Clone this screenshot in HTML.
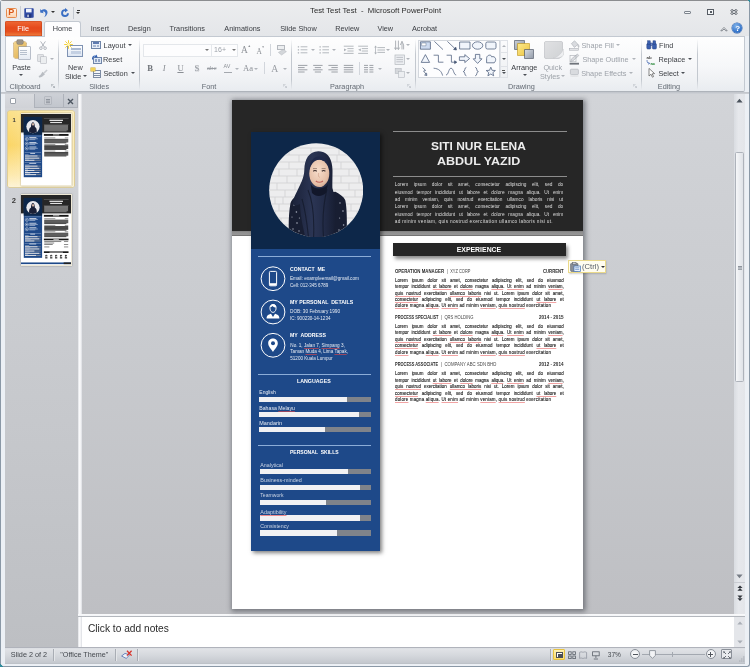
<!DOCTYPE html>
<html><head><meta charset="utf-8"><title>Test Test Test - Microsoft PowerPoint</title>
<style>
html,body{margin:0;padding:0}
body{width:750px;height:667px;overflow:hidden;position:relative;background:#ecf0f5;font-family:"Liberation Sans",sans-serif}
.t{position:absolute;white-space:pre;line-height:normal}
.t u{text-decoration:underline solid rgba(235,70,70,.6);text-decoration-thickness:.5px;text-underline-offset:.7px}
.a{position:absolute}
.sep{position:absolute;width:1px;top:39px;height:51px;background:linear-gradient(rgba(190,196,204,0),#c3c8cf 30%,#c3c8cf 80%,rgba(190,196,204,0))}
.dd{position:absolute;width:0;height:0;border-left:2px solid transparent;border-right:2px solid transparent;border-top:2.2px solid #4a4e55;margin-left:-.4px}
.dd.g{border-top-color:#b0b4ba}
.ln{position:absolute;height:1px;background:#8c8c8c}
.bar{position:absolute;height:5.2px;left:260px;width:110.6px;background:#7f838a}
.bar i{position:absolute;left:0;top:0;bottom:0;background:#f1f1f3}
.p{position:absolute;left:395px;width:168.8px;font-size:4.45px;line-height:6.5px;color:#262626;-webkit-text-stroke:.12px #262626;text-align:justify;text-align-last:justify;white-space:nowrap}
.p.l{text-align-last:left}
.p u,.hp u{text-decoration:underline solid rgba(225,50,50,.45);text-decoration-thickness:.5px;text-underline-offset:.7px}
.hp{position:absolute;left:394.8px;width:168.4px;font-size:4.75px;line-height:7.33px;color:#dcdcdc;text-align:justify;text-align-last:justify;white-space:nowrap}
.hp.l{text-align-last:left}
</style></head><body><div id="app" style="position:absolute;left:0;top:0;width:750px;height:667px;will-change:transform">
<!-- window frame -->
<div class="a" style="left:0;top:0;width:750px;height:667px;box-sizing:border-box;border:1px solid #8a98a6;border-top-color:#8b8d90;border-right-width:1.4px;border-radius:3px"></div>
<div class="a" style="left:1px;top:.8px;width:747.6px;height:35.4px;background:linear-gradient(#ecedef,#e4e6e9)"></div>
<div class="a" style="left:0;top:664px;width:3px;height:3px;background:linear-gradient(45deg,#2f8c9c 50%,rgba(0,0,0,0) 52%)"></div>
<div class="a" style="left:747px;top:0;width:3px;height:3px;background:linear-gradient(45deg,rgba(0,0,0,0) 50%,#2f8c9c 52%)"></div>
<!-- quick access toolbar -->
<div class="a" style="left:6.2px;top:7.6px;width:10.4px;height:10px;box-sizing:border-box;border:1px solid #e58b4e;border-radius:1.5px;background:linear-gradient(#fff3e6,#fbd5b5)"></div>
<span class="t" style="left:8.3px;top:7.2px;font-size:9px;font-weight:700;color:#d9591a">P</span>
<div class="a" style="left:20.2px;top:6px;width:1px;height:13px;background:#c9ced5"></div>
<svg class="a" style="left:24px;top:8px" width="10" height="10" viewBox="0 0 10 10"><rect x=".3" y=".3" width="9.4" height="9.4" rx=".8" fill="#2f4aa3"/><rect x="2" y=".8" width="5.6" height="3.6" fill="#eef2fb"/><rect x="2.6" y="6" width="4.8" height="3.7" fill="#23367e"/><rect x="3.4" y="6.6" width="1.3" height="2.6" fill="#dfe6f7"/></svg>
<svg class="a" style="left:38.5px;top:8px" width="10" height="10" viewBox="0 0 10 10"><path d="M1.2 4.6 L1.2 1 L2.4 2.2 C4.2 .6 7.2 .9 8.2 3 C9.2 5.4 7.6 8.2 5 9.2 C6.6 7.4 6.9 5.4 6 4.2 C5.3 3.4 4.3 3.5 3.7 4 L4.9 5.2 Z" fill="#3b6fc4"/></svg>
<div class="dd" style="left:51.2px;top:11.4px;border-top-color:#333"></div>
<svg class="a" style="left:59.5px;top:7.6px" width="10" height="10" viewBox="0 0 10 10"><path d="M5 1.2 A3.9 3.9 0 1 0 8.9 5.2 L7 5.2 A2 2 0 1 1 5 3.1 L5 4.6 L8 2.2 L5 0 Z" fill="#3b6fc4"/></svg>
<div class="a" style="left:73.2px;top:7px;width:1px;height:12px;background:#c4c9d0"></div>
<div class="a" style="left:76.6px;top:10px;width:3.6px;height:1px;background:#333"></div>
<div class="dd" style="left:76.8px;top:12.4px;border-top-color:#333"></div>
<!-- window buttons -->
<div class="a" style="left:684px;top:11.2px;width:7.4px;height:3.2px;box-sizing:border-box;border:1px solid #7d848d;border-radius:1px;background:#f4f6f8"></div>
<div class="a" style="left:707px;top:9px;width:7.4px;height:6px;box-sizing:border-box;border:1px solid #565c64;background:#f4f6f8"></div>
<div class="a" style="left:709.6px;top:11px;width:2.8px;height:2px;background:#565c64"></div>
<svg class="a" style="left:729.5px;top:9px" width="8" height="6" viewBox="0 0 8 6"><path d="M1 .8 L7 5.2 M7 .8 L1 5.2" stroke="#50565e" stroke-width="2.5"/><path d="M1 .8 L7 5.2 M7 .8 L1 5.2" stroke="#f4f5f7" stroke-width=".9"/></svg>
<!-- ribbon min + help -->
<svg class="a" style="left:720px;top:25.5px" width="8" height="6" viewBox="0 0 8 6"><path d="M.8 4.8 L4 1.4 L7.2 4.8 L5.8 4.8 L4 3 L2.2 4.8 Z" fill="#fff" stroke="#6d737b" stroke-width=".8" stroke-linejoin="round"/></svg>
<div class="a" style="left:732.3px;top:23.2px;width:10.2px;height:10.2px;border-radius:50%;background:radial-gradient(circle at 40% 30%,#7fb2ea,#2f6fc6 70%);box-shadow:0 0 0 .5px #2a5da8"></div>
<span class="t" style="left:735.2px;top:23.6px;font-size:8px;font-weight:700;color:#fff">?</span>
<!-- tabs -->
<div class="a" style="left:5.2px;top:21px;width:36.6px;height:14.8px;border-radius:2px 2px 0 0;background:linear-gradient(#ee6a36 0%,#e64a1c 45%,#e5501f 70%,#f0803f 100%);box-shadow:inset 0 0 0 .6px #c7431a"></div>
<div class="a" style="left:44.4px;top:21.4px;width:36.8px;height:15.4px;box-sizing:border-box;border:1px solid #c3c9d1;border-bottom:none;border-radius:2.5px 2.5px 0 0;background:#fdfdfe"></div>

<!-- ribbon body -->
<div class="a" style="left:4.6px;top:36px;width:740.4px;height:55.6px;box-sizing:border-box;border:1px solid #c3c9d1;border-bottom-color:#aeb3ba;border-radius:0 0 2px 2px;background:linear-gradient(#fefefe 0%,#f6f7f9 55%,#e9ecf0 100%)"></div>
<div class="a" style="left:45.4px;top:35.6px;width:34.8px;height:1.6px;background:#fdfdfe"></div>
<div class="a" style="left:1px;top:91.6px;width:748px;height:2.6px;background:linear-gradient(#bfc3c9,#cfd2d7)"></div>
<div class="sep" style="left:58px"></div><div class="sep" style="left:139px"></div><div class="sep" style="left:291.3px"></div><div class="sep" style="left:414.5px"></div><div class="sep" style="left:641px"></div><div class="sep" style="left:696.7px"></div>
<!-- clipboard -->
<div class="a" style="left:13.6px;top:42.4px;width:12.4px;height:15.6px;border-radius:1.2px;background:linear-gradient(135deg,#f3d58d,#dfae4f);box-shadow:0 0 0 .5px #b98a3a"></div>
<div class="a" style="left:16.6px;top:40.4px;width:6.4px;height:3.4px;border-radius:1px;background:#9b9387;box-shadow:0 0 0 .4px #6d675f"></div>
<div class="a" style="left:18.6px;top:46.6px;width:11px;height:12.4px;background:linear-gradient(#ffffff,#e6ebf3);box-shadow:0 0 0 .6px #8c97a8"></div>
<div class="a" style="left:20.4px;top:50px;width:7px;height:.8px;background:#b7c0cd;box-shadow:0 2px 0 #b7c0cd,0 4px 0 #b7c0cd"></div>
<div class="dd" style="left:19.8px;top:74.2px"></div>
<svg class="a" style="left:38.6px;top:40.8px" width="8" height="9" viewBox="0 0 8 9"><path d="M1.6 .4 L5.4 6 M6.4 .4 L2.6 6" stroke="#a8adb4" stroke-width=".9" fill="none"/><circle cx="1.9" cy="7.2" r="1.3" fill="none" stroke="#a8adb4" stroke-width=".9"/><circle cx="6.1" cy="7.2" r="1.3" fill="none" stroke="#a8adb4" stroke-width=".9"/></svg>
<div class="a" style="left:37.8px;top:55.2px;width:5.4px;height:6px;background:#e3e5e8;box-shadow:0 0 0 .6px #b3b7bd"></div>
<div class="a" style="left:40.6px;top:57px;width:5.4px;height:6px;background:#eceef0;box-shadow:0 0 0 .6px #b3b7bd"></div>
<div class="dd g" style="left:50.6px;top:58.4px"></div>
<svg class="a" style="left:38px;top:69px" width="10" height="9" viewBox="0 0 10 9"><path d="M5.4 3.4 L8.6 .4 L9.6 1.4 L6.6 4.6 Z" fill="#c9ccd1"/><path d="M.6 7 C2.4 6.6 3.4 4.6 4.6 2.8 L7 5.2 C5.4 6.6 3.6 8.6 1.2 8.6 Z" fill="#b9bdc3"/></svg>
<svg class="a" style="left:51.4px;top:84.2px" width="4" height="4" viewBox="0 0 4 4"><path d="M.3 .3 H2.6 M.3 .3 V2.6" stroke="#9298a0" stroke-width=".6" fill="none"/><path d="M1.4 1.4 L3.6 3.6 M3.6 2 V3.6 H2" stroke="#9298a0" stroke-width=".6" fill="none"/></svg>
<!-- slides -->
<div class="a" style="left:67.4px;top:44.6px;width:16px;height:12px;box-sizing:border-box;border:1px solid #7f93b3;background:linear-gradient(#ffffff,#dde6f3)"></div>
<div class="a" style="left:70.6px;top:48px;width:10px;height:1.8px;background:#a9b9d2"></div>
<div class="a" style="left:70.6px;top:51.4px;width:10px;height:2.6px;background:#c4d0e3"></div>
<svg class="a" style="left:64.2px;top:40.4px" width="9" height="9" viewBox="0 0 9 9"><path d="M4.5 .2 V8.8 M.2 4.5 H8.8 M1.4 1.4 L7.6 7.6 M7.6 1.4 L1.4 7.6" stroke="#f3cf3a" stroke-width="1"/><circle cx="4.5" cy="4.5" r="1.5" fill="#fff6b8"/></svg>
<div class="dd" style="left:83.4px;top:75.2px"></div>
<div class="a" style="left:91.4px;top:40.8px;width:9.6px;height:7.8px;box-sizing:border-box;border:1px solid #6f85a8;background:#e8eef8"></div>
<div class="a" style="left:93px;top:42.4px;width:6.4px;height:1.4px;background:#5f7bb0"></div>
<div class="a" style="left:93px;top:44.6px;width:2.8px;height:2.4px;background:#a9b8d1"></div><div class="a" style="left:96.6px;top:44.6px;width:2.8px;height:2.4px;background:#a9b8d1"></div>
<div class="dd" style="left:128.2px;top:44.2px"></div>
<div class="a" style="left:93px;top:56.6px;width:8.6px;height:7.4px;box-sizing:border-box;border:1px solid #6f85a8;background:#dfe7f4"></div>
<div class="a" style="left:94.6px;top:58.6px;width:2.4px;height:3.4px;background:#8ea2c4"></div><div class="a" style="left:97.8px;top:58.6px;width:2.4px;height:3.4px;background:#8ea2c4"></div>
<svg class="a" style="left:90.6px;top:53.6px" width="7" height="7" viewBox="0 0 7 7"><path d="M1 5.4 C.6 2.6 2.8 .8 5 1.6 L5.6 .4 L6.6 3.6 L3.4 3.6 L4.2 2.6 C3 2.2 1.8 3.4 2.2 5.4 Z" fill="#2f5fb3"/></svg>
<div class="a" style="left:93.4px;top:70px;width:7.8px;height:8px;box-sizing:border-box;border:1px solid #7c8ba3;background:#f3f6fa"></div>
<div class="a" style="left:93.4px;top:72.6px;width:7.8px;height:1px;background:#7c8ba3"></div><div class="a" style="left:93.4px;top:75.2px;width:7.8px;height:1px;background:#7c8ba3"></div>
<div class="a" style="left:91px;top:68.2px;width:3.6px;height:2.8px;background:#f1d257;box-shadow:0 0 0 .5px #c9a530"></div>
<div class="dd" style="left:131px;top:72.4px"></div>
<!-- font -->
<div class="a" style="left:142.6px;top:43.8px;width:69.2px;height:13px;box-sizing:border-box;border:1px solid #e4e7eb;background:#fdfdfe"></div>
<div class="a" style="left:211.2px;top:43.8px;width:27.2px;height:13px;box-sizing:border-box;border:1px solid #e4e7eb;background:#fdfdfe"></div>
<div class="dd" style="left:205.8px;top:49.2px;border-top-color:#777"></div><div class="dd" style="left:232px;top:49.2px;border-top-color:#777"></div>
<span class="t" style="left:241px;top:44.6px;font-family:'Liberation Serif',serif;font-size:9.4px;color:#8d9197">A</span><span class="t" style="left:247.4px;top:43.6px;font-size:3.6px;color:#8d9197">▲</span>
<span class="t" style="left:256.6px;top:46.8px;font-family:'Liberation Serif',serif;font-size:7.4px;color:#8d9197">A</span><span class="t" style="left:261.4px;top:44.6px;font-size:3.2px;color:#8d9197">▼</span>
<div class="a" style="left:270px;top:44px;width:1px;height:12px;background:#d2d6dc"></div>
<div class="a" style="left:277px;top:45px;width:7.6px;height:5px;box-sizing:border-box;border:.8px solid #b5b9bf;background:#eceef0"></div>
<svg class="a" style="left:277px;top:48.6px" width="10" height="7" viewBox="0 0 10 7"><path d="M1.4 3.4 L6.2 .6 L9.4 2.6 L4.6 6 Z" fill="#d3d6da" stroke="#b1b5bb" stroke-width=".5"/></svg>
<span class="t" style="left:147.2px;top:63.2px;font-family:'Liberation Serif',serif;font-size:8.6px;font-weight:700;color:#6d7177">B</span>
<span class="t" style="left:162.8px;top:63.2px;font-family:'Liberation Serif',serif;font-size:8.6px;font-style:italic;color:#8a8e94">I</span>
<span class="t" style="left:177.4px;top:63.2px;font-family:'Liberation Serif',serif;font-size:8.6px;text-decoration:underline;color:#8a8e94">U</span>
<span class="t" style="left:194.4px;top:63px;font-family:'Liberation Serif',serif;font-size:8.6px;font-weight:700;color:#a0a4aa;text-shadow:.6px .6px 0 #d5d7db">S</span>
<span class="t" style="left:207px;top:64.4px;font-family:'Liberation Serif',serif;font-size:6.8px;text-decoration:line-through;color:#9a9ea4">abc</span>
<span class="t" style="left:223.6px;top:63px;font-size:5.4px;color:#8d9197">AV</span><div class="a" style="left:224px;top:71.6px;width:8px;height:.8px;background:#a4a8ae"></div>
<div class="dd g" style="left:235px;top:67.6px"></div>
<span class="t" style="left:243px;top:63.4px;font-family:'Liberation Serif',serif;font-size:8.6px;color:#8d9197">Aa</span><div class="dd g" style="left:254.6px;top:67.6px"></div>
<div class="a" style="left:263.6px;top:62px;width:1px;height:12px;background:#d2d6dc"></div>
<span class="t" style="left:271.2px;top:62.6px;font-family:'Liberation Serif',serif;font-size:9.6px;color:#9a9ea4">A</span><div class="dd g" style="left:283.6px;top:67.6px"></div>
<svg class="a" style="left:283.4px;top:84.2px" width="4" height="4" viewBox="0 0 4 4"><path d="M.3 .3 H2.6 M.3 .3 V2.6" stroke="#b5bac1" stroke-width=".6" fill="none"/><path d="M1.4 1.4 L3.6 3.6 M3.6 2 V3.6 H2" stroke="#b5bac1" stroke-width=".6" fill="none"/></svg>
<!-- paragraph -->
<svg class="a" style="left:297px;top:45px" width="120" height="34" viewBox="0 0 120 34">
<g stroke="#aeb2b8" stroke-width=".9" fill="none">
<path d="M3.6 1.8 H10.4 M3.6 4.8 H10.4 M3.6 7.8 H10.4"/><path d="M25.4 1.8 H32 M25.4 4.8 H32 M25.4 7.8 H32"/>
<path d="M46.8 1.2 H56.6 M50.4 3.6 H56.6 M50.4 6 H56.6 M46.8 8.4 H56.6"/><path d="M61.2 1.2 H71 M64.8 3.6 H71 M64.8 6 H71 M61.2 8.4 H71"/>
<path d="M80.4 2.6 H88 M80.4 5 H88 M80.4 7.4 H88"/>
</g>
<g fill="#aeb2b8"><rect x=".8" y="1.2" width="1.3" height="1.3"/><rect x=".8" y="4.2" width="1.3" height="1.3"/><rect x=".8" y="7.2" width="1.3" height="1.3"/><rect x="22.6" y="1" width="1" height="1.7"/><rect x="22.6" y="4" width="1" height="1.7"/><rect x="22.6" y="7" width="1" height="1.7"/>
<path d="M47 3.4 L49.6 4.8 L47 6.2 Z"/><path d="M63.8 3.4 L61.2 4.8 L63.8 6.2 Z"/><path d="M78.6 .4 L80 2.4 H77.2 Z M78.6 9.6 L80 7.6 H77.2 Z"/><rect x="78.2" y="2" width=".8" height="6"/></g>
<g stroke="#9da1a7" stroke-width="1" fill="none">
<path d="M1 20.4 H10.4 M1 22.6 H7.6 M1 24.8 H10.4 M1 27 H7.6"/>
<path d="M16.2 20.4 H25.6 M17.8 22.6 H24 M16.2 24.8 H25.6 M17.8 27 H24"/>
<path d="M31.4 20.4 H40.8 M34.4 22.6 H40.8 M31.4 24.8 H40.8 M34.4 27 H40.8"/>
<path d="M46.8 20.4 H56.2 M46.8 22.6 H56.2 M46.8 24.8 H56.2 M46.8 27 H56.2"/>
<path d="M67 20.4 H71 M67 22.6 H71 M67 24.8 H71 M67 27 H71 M72.4 20.4 H76.4 M72.4 22.6 H76.4 M72.4 24.8 H76.4 M72.4 27 H76.4"/>
</g></svg>
<div class="dd g" style="left:311.4px;top:49.2px"></div><div class="dd g" style="left:332.6px;top:49.2px"></div><div class="dd g" style="left:386.8px;top:49.2px"></div><div class="dd g" style="left:378px;top:68px"></div>
<div class="a" style="left:358.7px;top:62px;width:1px;height:13px;background:#d2d6dc"></div>
<svg class="a" style="left:394px;top:39.6px" width="18" height="40" viewBox="0 0 18 40"><g stroke="#a6aab0" stroke-width=".9" fill="none"><path d="M1.6 .6 V9.4 M4.4 .6 V9.4 M8 3 V9.4 M.4 7.6 L1.6 9.6 L2.8 7.6 M3.2 7.6 L4.4 9.6 L5.6 7.6"/><path d="M6.4 5 L8 1.2 L9.6 5 V9.4"/></g><rect x="1" y="15" width="9.4" height="9.4" fill="#eceef1" stroke="#b4b8be" stroke-width=".7"/><path d="M2.4 17.4 H9 M2.4 19.6 H9 M2.4 21.8 H9" stroke="#b4b8be" stroke-width=".8"/><rect x="1.2" y="28.4" width="6" height="5" fill="#d5d8dc" stroke="#b4b8be" stroke-width=".6"/><rect x="4.4" y="31.4" width="6" height="6" fill="#eceef1" stroke="#b4b8be" stroke-width=".6"/></svg>
<div class="dd g" style="left:406.6px;top:44.2px"></div><div class="dd g" style="left:406.6px;top:58.4px"></div><div class="dd g" style="left:406.6px;top:72.4px"></div>
<svg class="a" style="left:407.4px;top:84.2px" width="4" height="4" viewBox="0 0 4 4"><path d="M.3 .3 H2.6 M.3 .3 V2.6" stroke="#b5bac1" stroke-width=".6" fill="none"/><path d="M1.4 1.4 L3.6 3.6 M3.6 2 V3.6 H2" stroke="#b5bac1" stroke-width=".6" fill="none"/></svg>
<!-- shapes gallery -->
<div class="a" style="left:418px;top:39.6px;width:82px;height:38.8px;box-sizing:border-box;border:1px solid #d3d7dd;background:#fdfdfe"></div>
<div class="a" style="left:499.6px;top:39.6px;width:8px;height:38.8px;box-sizing:border-box;border:1px solid #dfe2e7;background:linear-gradient(#fbfbfc,#eef0f3)"></div>
<div class="a" style="left:499.6px;top:52.4px;width:8px;height:1px;background:#dfe2e7"></div><div class="a" style="left:499.6px;top:65.6px;width:8px;height:1px;background:#dfe2e7"></div>
<div class="dd g" style="left:502px;top:45px;transform:rotate(180deg)"></div><div class="dd" style="left:502px;top:58.4px"></div><div class="a" style="left:501.8px;top:69.8px;width:3.6px;height:.8px;background:#555"></div><div class="dd" style="left:502px;top:71.8px"></div>
<svg class="a" style="left:419px;top:40.4px" width="80" height="37" viewBox="0 0 80 37"><g stroke="#4a5b7a" stroke-width=".75" fill="#f1f5fb" stroke-linejoin="round">
<rect x="1.4" y="1.8" width="10" height="7.4" fill="#cfdcf1"/><rect x="2.6" y="3" width="4.4" height="2.8" fill="#fff" stroke-width=".4"/>
<path d="M15.4 1.4 L24 9.6" fill="none"/><path d="M28.4 1.4 L36.4 9" fill="none"/><path d="M37.4 10 L34.6 9.4 L36.8 7.2 Z" fill="#44546f"/>
<rect x="40.6" y="2" width="10.4" height="7"/><ellipse cx="58.6" cy="5.5" rx="5.2" ry="3.7"/><rect x="66.8" y="2" width="10.2" height="7" rx="1.6"/>
<path d="M6.4 14.6 L10.6 22.4 H2.2 Z"/><path d="M14.6 15.2 H19.4 V22.2 H24.4" fill="none"/><path d="M27.6 15.2 H32.4 V22.2 H36.6" fill="none"/><path d="M37.8 22.2 L35.6 20.8 V23.6 Z" fill="#44546f"/>
<path d="M40.4 16.8 H45.8 V14.6 L50.6 18.6 L45.8 22.6 V20.4 H40.4 Z"/><path d="M56.4 14.4 H60.8 V18.8 H63 L58.6 23.4 L54.2 18.8 H56.4 Z"/><path d="M67.6 22.8 V18.4 C67.6 14.6 72.6 14.2 72.6 16.8 C76.6 15.6 78 20.2 75.2 22.8 Z"/>
<path d="M3.6 27.6 L6.6 30.4 L4.6 31 L7.4 34.6 M7.8 35.6 L5.6 35 L7.6 33.2 Z" fill="none"/><path d="M14.6 28.2 C20 28.6 22.6 31.4 23.6 35.6" fill="none"/><path d="M27 35 C29.6 35 29.6 28.2 32 28.2 C34.6 28.2 34.6 35 37.2 35" fill="none"/>
<path d="M47.4 27.4 C45 27.4 46.6 31.6 44.2 31.6 C46.6 31.6 45 35.8 47.4 35.8" fill="none"/><path d="M56.2 27.4 C58.6 27.4 57 31.6 59.4 31.6 C57 31.6 58.6 35.8 56.2 35.8" fill="none"/>
<path d="M71.8 27.2 L73.1 30.3 L76.4 30.5 L73.9 32.6 L74.7 35.8 L71.8 34 L68.9 35.8 L69.7 32.6 L67.2 30.5 L70.5 30.3 Z"/></g></svg>
<!-- arrange -->
<div class="a" style="left:514.6px;top:40.6px;width:9px;height:8.6px;background:linear-gradient(135deg,#c9ced6,#8d95a2);box-shadow:0 0 0 .8px #5d6675"></div>
<div class="a" style="left:518.2px;top:44.4px;width:11px;height:10.6px;background:linear-gradient(135deg,#fbe88a,#eec541);box-shadow:0 0 0 .8px #caa42f"></div>
<div class="a" style="left:525px;top:50.4px;width:8.4px;height:8px;background:linear-gradient(135deg,#d5dae1,#959dab);box-shadow:0 0 0 .8px #5d6675"></div>
<div class="dd" style="left:523px;top:74.2px"></div>
<!-- quick styles -->
<div class="a" style="left:544.4px;top:40.6px;width:18.6px;height:18px;border-radius:3px 3px 6px 3px;background:linear-gradient(135deg,#e1e2e4,#cfd1d4);box-shadow:inset 0 0 0 .6px #c3c5c9"></div>
<svg class="a" style="left:552px;top:48px" width="12" height="11" viewBox="0 0 12 11"><path d="M1 10 C5 9.6 9.6 6 11.2 1 L11.6 7 C10 9.4 6 10.6 1 10 Z" fill="#eeeff1" stroke="#c6c8cc" stroke-width=".5"/></svg>
<div class="dd g" style="left:561.8px;top:75.2px"></div>
<!-- shape fill/outline/effects -->
<svg class="a" style="left:568.6px;top:40px" width="11" height="38" viewBox="0 0 11 38"><g fill="#d9dbdf" stroke="#a9adb3" stroke-width=".6"><path d="M2.4 3.6 L5.6 .8 L9 4.4 L5.4 7.4 Z"/><path d="M9 4.4 C10.2 5.6 10.2 6.8 9.6 7.6 C9 6.8 8.8 5.6 9 4.4Z"/><rect x=".6" y="8.6" width="8.8" height="1.6" fill="#e8e9ec"/>
<path d="M1.6 21.6 L2.4 19 L8.4 14 L9.8 15.6 L4 20.8 Z"/><rect x=".6" y="22.8" width="9.4" height="1.8" fill="#6f747b" stroke="none"/><rect x="1" y="15.4" width="6" height="6.4" fill="none"/>
<rect x="1.4" y="29.2" width="8" height="5.4" rx="1"/><ellipse cx="5.4" cy="36" rx="4.4" ry="1" fill="#e4e5e8" stroke="none"/></g></svg>
<div class="dd g" style="left:616.4px;top:44.2px"></div><div class="dd g" style="left:632.4px;top:58.4px"></div><div class="dd g" style="left:629px;top:72.4px"></div>
<svg class="a" style="left:633.4px;top:84.2px" width="4" height="4" viewBox="0 0 4 4"><path d="M.3 .3 H2.6 M.3 .3 V2.6" stroke="#b5bac1" stroke-width=".6" fill="none"/><path d="M1.4 1.4 L3.6 3.6 M3.6 2 V3.6 H2" stroke="#b5bac1" stroke-width=".6" fill="none"/></svg>
<!-- editing -->
<svg class="a" style="left:645.6px;top:40px" width="12" height="38" viewBox="0 0 12 38"><g fill="#3a5fae" stroke="#233f82" stroke-width=".5"><rect x=".8" y="3.4" width="4" height="5.6" rx="1"/><rect x="6.4" y="3.4" width="4" height="5.6" rx="1"/><rect x="1.6" y=".8" width="2.6" height="3.4"/><rect x="7" y=".8" width="2.6" height="3.4"/><rect x="4.6" y="3" width="2" height="2.4" fill="#6d88c8"/></g>
<text x=".6" y="18.6" font-family="Liberation Sans,sans-serif" font-size="4.4" font-weight="700" fill="#444">ab</text><text x="4.4" y="24.6" font-family="Liberation Sans,sans-serif" font-size="4.4" font-weight="700" fill="#2e8b3d">ac</text><path d="M1 20 C1 23 2 23.4 3.6 23.4 M3.6 23.4 L2.4 22.2 M3.6 23.4 L2.4 24.4" stroke="#3a5fae" stroke-width=".7" fill="none"/>
<path d="M3 28.4 L3 36 L5 34.2 L6.4 37.2 L7.6 36.6 L6.2 33.8 L8.6 33.6 Z" fill="#fff" stroke="#555" stroke-width=".7" stroke-linejoin="round"/></svg>
<div class="dd" style="left:688.4px;top:58.4px"></div><div class="dd" style="left:681.6px;top:72.4px"></div>

<!-- left panel + workspace -->
<div class="a" style="left:4.5px;top:94.2px;width:73.1px;height:553.2px;background:linear-gradient(#d3d5d9,#bdbfc3)"></div>
<div class="a" style="left:77.6px;top:94.2px;width:4.2px;height:553.2px;background:linear-gradient(90deg,#dfe1e5,#fbfbfc 40%,#f1f2f4 70%,#d9dbe0)"></div>
<div class="a" style="left:81.8px;top:94.2px;width:652.6px;height:520.4px;background:linear-gradient(#d2d4d8 0%,#c9cbcf 45%,#bebfc3 100%)"></div>
<!-- panel tabs -->
<div class="a" style="left:4.5px;top:94.4px;width:29.7px;height:13.6px;background:linear-gradient(#d9dbdf,#d0d2d7)"></div>
<div class="a" style="left:34.2px;top:94.4px;width:43.4px;height:13.2px;box-sizing:border-box;background:linear-gradient(#cdd0d6,#c2c6cd);border:1px solid #aeb2ba;border-top:none"></div>
<div class="a" style="left:63.2px;top:94.4px;width:1px;height:13.2px;background:#aeb2ba"></div>
<div class="a" style="left:9.6px;top:98.4px;width:6px;height:5.2px;box-sizing:border-box;border:.8px solid #9aa0a9;border-radius:1px;background:#fff"></div>
<div class="a" style="left:44.6px;top:97.4px;width:6.4px;height:6.6px;background:#c9ccd2;box-shadow:0 0 0 .5px #a1a6ae"></div><div class="a" style="left:45.6px;top:99px;width:4.4px;height:.8px;background:#8f959e;box-shadow:0 1.6px 0 #8f959e,0 3.2px 0 #8f959e"></div>
<svg class="a" style="left:67.4px;top:98px" width="7" height="7" viewBox="0 0 7 7"><path d="M1 1 L6 6 M6 1 L1 6" stroke="#4d5661" stroke-width="1.4"/></svg>
<!-- selected highlight -->
<div class="a" style="left:7.8px;top:110.8px;width:66.2px;height:76.6px;border-radius:1.5px;background:linear-gradient(90deg,rgba(252,216,110,0) 0%,rgba(255,246,214,.75) 100%),linear-gradient(#fbe08a 0%,#fbd566 45%,#fdeab0 85%,#fdf3d6 100%);box-shadow:0 0 0 .6px #eacb6a"></div>
<div class="a" style="left:20.7px;top:113.2px;width:51.4px;height:72.6px;background:#efe9d6;box-shadow:0 0 1.5px rgba(0,0,0,.35)"></div><svg class="a" style="left:21.4px;top:113.9px" width="50" height="71.2" viewBox="0 0 351.6 508" preserveAspectRatio="none"><rect width="351.6" height="508" fill="#fff"/><rect width="351.6" height="131" fill="#262626"/><rect y="131" width="351.6" height="6" fill="#000" opacity=".25"/><rect x="19.6" y="32" width="128.8" height="419" fill="#1e4989"/><rect x="19.6" y="20" width="128.8" height="128.4" fill="#0d2749"/><circle cx="84.3" cy="89.7" r="46.8" fill="#e9e9ec"/><path d="M57 128 C56 100 64 96 70 92 C72 84 70 62 84 58 C98 62 96 84 98 92 C104 96 112 100 111 128 C100 138 68 138 57 128 Z" fill="#1a2036"/><ellipse cx="84.6" cy="74" rx="7" ry="10" fill="#d9b9a6"/><rect x="160.8" y="30" width="174" height="2.4" fill="#9a9a9a"/><rect x="160.8" y="74.6" width="174" height="2.4" fill="#8a8a8a"/><rect x="200" y="41" width="95" height="8.5" fill="#f0f0f0"/><rect x="205" y="56.5" width="83" height="8.5" fill="#e2e2e2"/><rect x="163" y="82.0" width="168" height="4.2" fill="#b5b5b5"/><rect x="163" y="89.3" width="168" height="4.2" fill="#b5b5b5"/><rect x="163" y="96.7" width="168" height="4.2" fill="#b5b5b5"/><rect x="163" y="104.0" width="168" height="4.2" fill="#b5b5b5"/><rect x="163" y="111.3" width="168" height="4.2" fill="#b5b5b5"/><rect x="163" y="118.7" width="158" height="4.2" fill="#b5b5b5"/><rect x="160.8" y="142.7" width="173.4" height="13.2" fill="#161616"/><rect x="225" y="146.6" width="44" height="5.4" fill="#e6e6e6"/><rect x="163.3" y="168.6" width="78" height="4" fill="#555"/><rect x="308" y="168.6" width="24" height="4" fill="#555"/><rect x="163.3" y="177.4" width="168.8" height="5.4" fill="#111"/><rect x="163.3" y="183.8" width="168.8" height="5.4" fill="#111"/><rect x="163.3" y="190.3" width="168.8" height="5.4" fill="#111"/><rect x="163.3" y="196.8" width="168.8" height="5.4" fill="#111"/><rect x="163.3" y="203.2" width="156" height="5.4" fill="#111"/><rect x="163.3" y="215.0" width="78" height="4" fill="#555"/><rect x="308" y="215.0" width="24" height="4" fill="#555"/><rect x="163.3" y="223.8" width="168.8" height="5.4" fill="#111"/><rect x="163.3" y="230.2" width="168.8" height="5.4" fill="#111"/><rect x="163.3" y="236.7" width="168.8" height="5.4" fill="#111"/><rect x="163.3" y="243.2" width="168.8" height="5.4" fill="#111"/><rect x="163.3" y="249.6" width="156" height="5.4" fill="#111"/><rect x="163.3" y="262.2" width="78" height="4" fill="#555"/><rect x="308" y="262.2" width="24" height="4" fill="#555"/><rect x="163.3" y="271.0" width="168.8" height="5.4" fill="#111"/><rect x="163.3" y="277.4" width="168.8" height="5.4" fill="#111"/><rect x="163.3" y="283.9" width="168.8" height="5.4" fill="#111"/><rect x="163.3" y="290.4" width="168.8" height="5.4" fill="#111"/><rect x="163.3" y="296.8" width="156" height="5.4" fill="#111"/><circle cx="41.3" cy="178.4" r="11.6" fill="none" stroke="#fff" stroke-width="2.8"/><circle cx="41.3" cy="178.4" r="5" fill="#e6ecf6"/><rect x="58.3" y="166.4" width="50" height="5" fill="#fff"/><rect x="58.3" y="175.4" width="60" height="4" fill="#cdd8ea"/><rect x="58.3" y="182.0" width="42" height="4" fill="#cdd8ea"/><circle cx="41.3" cy="211.7" r="11.6" fill="none" stroke="#fff" stroke-width="2.8"/><circle cx="41.3" cy="211.7" r="5" fill="#e6ecf6"/><rect x="58.3" y="199.7" width="50" height="5" fill="#fff"/><rect x="58.3" y="208.7" width="60" height="4" fill="#cdd8ea"/><rect x="58.3" y="215.3" width="42" height="4" fill="#cdd8ea"/><circle cx="41.3" cy="245" r="11.6" fill="none" stroke="#fff" stroke-width="2.8"/><circle cx="41.3" cy="245" r="5" fill="#e6ecf6"/><rect x="58.3" y="233.0" width="50" height="5" fill="#fff"/><rect x="58.3" y="242.0" width="60" height="4" fill="#cdd8ea"/><rect x="58.3" y="248.6" width="42" height="4" fill="#cdd8ea"/><rect x="26.3" y="156" width="115" height="2.4" fill="#cddaee"/><rect x="26.3" y="273.8" width="115" height="2.4" fill="#cddaee"/><rect x="26.3" y="344.6" width="115" height="2.4" fill="#cddaee"/><rect x="65" y="278" width="34" height="5" fill="#fff"/><rect x="58" y="349" width="49" height="5" fill="#fff"/><rect x="28.1" y="296.7" width="110.8" height="5.8" fill="#8a8e96"/><rect x="28.1" y="296.7" width="88" height="5.8" fill="#f6f6f8"/><rect x="28.1" y="289.7" width="25" height="3.4" fill="#b9c7de"/><rect x="28.1" y="311.9" width="110.8" height="5.8" fill="#8a8e96"/><rect x="28.1" y="311.9" width="99.9" height="5.8" fill="#f6f6f8"/><rect x="28.1" y="304.9" width="31" height="3.4" fill="#b9c7de"/><rect x="28.1" y="326.9" width="110.8" height="5.8" fill="#8a8e96"/><rect x="28.1" y="326.9" width="66" height="5.8" fill="#f6f6f8"/><rect x="28.1" y="319.9" width="27" height="3.4" fill="#b9c7de"/><rect x="28.1" y="368.9" width="110.8" height="5.8" fill="#8a8e96"/><rect x="28.1" y="368.9" width="88" height="5.8" fill="#f6f6f8"/><rect x="28.1" y="361.9" width="32" height="3.4" fill="#b9c7de"/><rect x="28.1" y="384.3" width="110.8" height="5.8" fill="#8a8e96"/><rect x="28.1" y="384.3" width="99.9" height="5.8" fill="#f6f6f8"/><rect x="28.1" y="377.3" width="33" height="3.4" fill="#b9c7de"/><rect x="28.1" y="399.3" width="110.8" height="5.8" fill="#8a8e96"/><rect x="28.1" y="399.3" width="66" height="5.8" fill="#f6f6f8"/><rect x="28.1" y="392.3" width="21" height="3.4" fill="#b9c7de"/><rect x="28.1" y="415.1" width="110.8" height="5.8" fill="#8a8e96"/><rect x="28.1" y="415.1" width="100.2" height="5.8" fill="#f6f6f8"/><rect x="28.1" y="408.1" width="20" height="3.4" fill="#b9c7de"/><rect x="28.1" y="430.1" width="110.8" height="5.8" fill="#8a8e96"/><rect x="28.1" y="430.1" width="77.4" height="5.8" fill="#f6f6f8"/><rect x="28.1" y="423.1" width="37" height="3.4" fill="#b9c7de"/></svg>
<div class="a" style="left:20.7px;top:194.0px;width:51.4px;height:72.2px;background:#efe9d6;box-shadow:0 0 1.5px rgba(0,0,0,.35)"></div><svg class="a" style="left:21.4px;top:194.7px" width="50" height="70.8" viewBox="0 0 351.6 508" preserveAspectRatio="none"><rect width="351.6" height="508" fill="#fff"/><rect width="351.6" height="131" fill="#262626"/><rect y="131" width="351.6" height="6" fill="#000" opacity=".25"/><rect x="19.6" y="32" width="128.8" height="419" fill="#1e4989"/><rect x="19.6" y="20" width="128.8" height="128.4" fill="#0d2749"/><circle cx="84.3" cy="89.7" r="46.8" fill="#e9e9ec"/><path d="M57 128 C56 100 64 96 70 92 C72 84 70 62 84 58 C98 62 96 84 98 92 C104 96 112 100 111 128 C100 138 68 138 57 128 Z" fill="#1a2036"/><ellipse cx="84.6" cy="74" rx="7" ry="10" fill="#d9b9a6"/><rect x="160.8" y="30" width="174" height="2.4" fill="#9a9a9a"/><rect x="160.8" y="74.6" width="174" height="2.4" fill="#8a8a8a"/><rect x="200" y="41" width="95" height="8.5" fill="#f0f0f0"/><rect x="205" y="56.5" width="83" height="8.5" fill="#e2e2e2"/><rect x="163" y="82.0" width="168" height="4.2" fill="#b5b5b5"/><rect x="163" y="89.3" width="168" height="4.2" fill="#b5b5b5"/><rect x="163" y="96.7" width="168" height="4.2" fill="#b5b5b5"/><rect x="163" y="104.0" width="168" height="4.2" fill="#b5b5b5"/><rect x="163" y="111.3" width="168" height="4.2" fill="#b5b5b5"/><rect x="163" y="118.7" width="158" height="4.2" fill="#b5b5b5"/><rect x="160.8" y="142.7" width="173.4" height="13.2" fill="#161616"/><rect x="225" y="146.6" width="44" height="5.4" fill="#e6e6e6"/><rect x="163.3" y="168.6" width="78" height="4" fill="#555"/><rect x="308" y="168.6" width="24" height="4" fill="#555"/><rect x="163.3" y="177.4" width="168.8" height="5.4" fill="#111"/><rect x="163.3" y="183.8" width="168.8" height="5.4" fill="#111"/><rect x="163.3" y="190.3" width="168.8" height="5.4" fill="#111"/><rect x="163.3" y="196.8" width="168.8" height="5.4" fill="#111"/><rect x="163.3" y="203.2" width="156" height="5.4" fill="#111"/><rect x="163.3" y="215.0" width="78" height="4" fill="#555"/><rect x="308" y="215.0" width="24" height="4" fill="#555"/><rect x="163.3" y="223.8" width="168.8" height="5.4" fill="#111"/><rect x="163.3" y="230.2" width="168.8" height="5.4" fill="#111"/><rect x="163.3" y="236.7" width="168.8" height="5.4" fill="#111"/><rect x="163.3" y="243.2" width="168.8" height="5.4" fill="#111"/><rect x="163.3" y="249.6" width="156" height="5.4" fill="#111"/><rect x="163.3" y="262.2" width="78" height="4" fill="#555"/><rect x="308" y="262.2" width="24" height="4" fill="#555"/><rect x="163.3" y="271.0" width="168.8" height="5.4" fill="#111"/><rect x="163.3" y="277.4" width="168.8" height="5.4" fill="#111"/><rect x="163.3" y="283.9" width="168.8" height="5.4" fill="#111"/><rect x="163.3" y="290.4" width="168.8" height="5.4" fill="#111"/><rect x="163.3" y="296.8" width="156" height="5.4" fill="#111"/><circle cx="41.3" cy="178.4" r="11.6" fill="none" stroke="#fff" stroke-width="2.8"/><circle cx="41.3" cy="178.4" r="5" fill="#e6ecf6"/><rect x="58.3" y="166.4" width="50" height="5" fill="#fff"/><rect x="58.3" y="175.4" width="60" height="4" fill="#cdd8ea"/><rect x="58.3" y="182.0" width="42" height="4" fill="#cdd8ea"/><circle cx="41.3" cy="211.7" r="11.6" fill="none" stroke="#fff" stroke-width="2.8"/><circle cx="41.3" cy="211.7" r="5" fill="#e6ecf6"/><rect x="58.3" y="199.7" width="50" height="5" fill="#fff"/><rect x="58.3" y="208.7" width="60" height="4" fill="#cdd8ea"/><rect x="58.3" y="215.3" width="42" height="4" fill="#cdd8ea"/><circle cx="41.3" cy="245" r="11.6" fill="none" stroke="#fff" stroke-width="2.8"/><circle cx="41.3" cy="245" r="5" fill="#e6ecf6"/><rect x="58.3" y="233.0" width="50" height="5" fill="#fff"/><rect x="58.3" y="242.0" width="60" height="4" fill="#cdd8ea"/><rect x="58.3" y="248.6" width="42" height="4" fill="#cdd8ea"/><rect x="26.3" y="156" width="115" height="2.4" fill="#cddaee"/><rect x="26.3" y="273.8" width="115" height="2.4" fill="#cddaee"/><rect x="26.3" y="344.6" width="115" height="2.4" fill="#cddaee"/><rect x="65" y="278" width="34" height="5" fill="#fff"/><rect x="58" y="349" width="49" height="5" fill="#fff"/><rect x="28.1" y="296.7" width="110.8" height="5.8" fill="#8a8e96"/><rect x="28.1" y="296.7" width="88" height="5.8" fill="#f6f6f8"/><rect x="28.1" y="289.7" width="25" height="3.4" fill="#b9c7de"/><rect x="28.1" y="311.9" width="110.8" height="5.8" fill="#8a8e96"/><rect x="28.1" y="311.9" width="99.9" height="5.8" fill="#f6f6f8"/><rect x="28.1" y="304.9" width="25" height="3.4" fill="#b9c7de"/><rect x="28.1" y="326.9" width="110.8" height="5.8" fill="#8a8e96"/><rect x="28.1" y="326.9" width="66" height="5.8" fill="#f6f6f8"/><rect x="28.1" y="319.9" width="40" height="3.4" fill="#b9c7de"/><rect x="28.1" y="368.9" width="110.8" height="5.8" fill="#8a8e96"/><rect x="28.1" y="368.9" width="88" height="5.8" fill="#f6f6f8"/><rect x="28.1" y="361.9" width="29" height="3.4" fill="#b9c7de"/><rect x="28.1" y="384.3" width="110.8" height="5.8" fill="#8a8e96"/><rect x="28.1" y="384.3" width="99.9" height="5.8" fill="#f6f6f8"/><rect x="28.1" y="377.3" width="37" height="3.4" fill="#b9c7de"/><rect x="28.1" y="399.3" width="110.8" height="5.8" fill="#8a8e96"/><rect x="28.1" y="399.3" width="66" height="5.8" fill="#f6f6f8"/><rect x="28.1" y="392.3" width="30" height="3.4" fill="#b9c7de"/><rect x="28.1" y="415.1" width="110.8" height="5.8" fill="#8a8e96"/><rect x="28.1" y="415.1" width="100.2" height="5.8" fill="#f6f6f8"/><rect x="28.1" y="408.1" width="33" height="3.4" fill="#b9c7de"/><rect x="28.1" y="430.1" width="110.8" height="5.8" fill="#8a8e96"/><rect x="28.1" y="430.1" width="77.4" height="5.8" fill="#f6f6f8"/><rect x="28.1" y="423.1" width="23" height="3.4" fill="#b9c7de"/><rect x="160.8" y="313" width="173.4" height="12" fill="#161616"/><rect x="228" y="316.4" width="38" height="5" fill="#e6e6e6"/><rect x="163.3" y="333.0" width="120" height="4.4" fill="#3a3a3a"/><rect x="302" y="333.0" width="30" height="4.4" fill="#444"/><rect x="163.3" y="342.4" width="70" height="4.4" fill="#3a3a3a"/><rect x="163.3" y="351.8" width="60" height="4.4" fill="#3a3a3a"/><rect x="302" y="351.8" width="30" height="4.4" fill="#444"/><rect x="163.3" y="370.6" width="36" height="4.4" fill="#3a3a3a"/><rect x="302" y="370.6" width="30" height="4.4" fill="#444"/><rect x="160.8" y="404" width="173.4" height="12" fill="#161616"/><rect x="200" y="407.4" width="95" height="5" fill="#e6e6e6"/><circle cx="178.0" cy="436" r="8" fill="#3a3a3a"/><rect x="170.0" y="444" width="16" height="12" fill="#555"/><circle cx="181.0" cy="440" r="4" fill="#ddd"/><circle cx="212.5" cy="436" r="8" fill="#3a3a3a"/><rect x="204.5" y="444" width="16" height="12" fill="#555"/><circle cx="215.5" cy="440" r="4" fill="#ddd"/><circle cx="247.0" cy="436" r="8" fill="#3a3a3a"/><rect x="239.0" y="444" width="16" height="12" fill="#555"/><circle cx="250.0" cy="440" r="4" fill="#ddd"/><circle cx="281.5" cy="436" r="8" fill="#3a3a3a"/><rect x="273.5" y="444" width="16" height="12" fill="#555"/><circle cx="284.5" cy="440" r="4" fill="#ddd"/><circle cx="316.0" cy="436" r="8" fill="#3a3a3a"/><rect x="308.0" y="444" width="16" height="12" fill="#555"/><circle cx="319.0" cy="440" r="4" fill="#ddd"/><rect x="0" y="484" width="351.6" height="12" fill="#1e4989"/><rect x="300" y="484" width="51.6" height="12" fill="#222"/></svg>
<!-- vertical scrollbar -->
<div class="a" style="left:734.4px;top:94.2px;width:10.4px;height:520.4px;background:linear-gradient(90deg,#d9dce1,#e6e8ec 40%,#e3e5e9)"></div>
<div class="a" style="left:735px;top:152.4px;width:9.2px;height:229.6px;box-sizing:border-box;border:.8px solid #aeb3bb;border-radius:1.5px;background:linear-gradient(90deg,#f6f7f9,#dfe2e7)"></div>
<div class="a" style="left:737.6px;top:265.8px;width:4px;height:.8px;background:#8d939c;box-shadow:0 1.4px 0 #8d939c,0 2.8px 0 #8d939c"></div>
<svg class="a" style="left:736px;top:97.6px" width="7" height="5" viewBox="0 0 7 5"><path d="M.4 4.4 L3.5 .8 L6.6 4.4 Z" fill="#4a525c"/></svg>
<svg class="a" style="left:736.4px;top:574.4px" width="7" height="5" viewBox="0 0 7 5"><path d="M.4 .6 L3.5 4.2 L6.6 .6 Z" fill="#767c85"/></svg>
<div class="a" style="left:734.4px;top:582px;width:10.4px;height:1px;background:#c9ccd2"></div>
<svg class="a" style="left:736.8px;top:585px" width="6" height="17" viewBox="0 0 6 17"><path d="M3 .4 L5.6 3 H.4 Z M3 3 L5.6 5.8 H.4 Z M.4 10.4 H5.6 L3 13.2 Z M.4 13.2 H5.6 L3 16 Z" fill="#2f343b"/></svg>
<!-- notes -->
<div class="a" style="left:77.6px;top:614.4px;width:667.2px;height:2.8px;background:linear-gradient(#fafbfc 0,#f3f4f6 2px,#b3b7bd 2px,#b3b7bd 2.8px)"></div>
<div class="a" style="left:81.8px;top:617.2px;width:652.6px;height:30.2px;background:#fff"></div>
<div class="a" style="left:734.4px;top:617px;width:10.4px;height:30.4px;background:#e4e6ea"></div>
<svg class="a" style="left:736.6px;top:621.4px" width="6" height="4" viewBox="0 0 6 4"><path d="M.3 3.6 L3 .6 L5.7 3.6 Z" fill="#a9aeb6"/></svg>
<svg class="a" style="left:736.6px;top:639.6px" width="6" height="4" viewBox="0 0 6 4"><path d="M.3 .4 L3 3.4 L5.7 .4 Z" fill="#a9aeb6"/></svg>

<!-- slide -->
<div class="a" style="left:231.7px;top:100.3px;width:351.6px;height:508.5px;background:#fff;box-shadow:.8px .8px 5px 2.2px rgba(40,44,52,.5)"></div>
<div class="a" style="left:231.7px;top:230.6px;width:351.6px;height:5.6px;background:linear-gradient(#7c7c7c 0,#8e8e8e 1px,#979797 4px,#6e6e6e 4.6px,#777 5px,rgba(150,150,150,0) 5.6px)"></div>
<div class="a" style="left:231.7px;top:100.3px;width:351.6px;height:130.6px;background:#262626"></div>
<!-- blue box -->
<div class="a" style="left:251.3px;top:132.3px;width:128.8px;height:419px;background:#1e4989;box-shadow:2px 2px 4px rgba(0,0,0,.5)"></div>
<div class="a" style="left:251.3px;top:132.3px;width:128.8px;height:116.4px;background:#0d2749"></div>
<!-- portrait -->
<svg class="a" style="left:269px;top:143px" width="94.4" height="94.4" viewBox="0 0 94.4 94.4">
<defs><clipPath id="pc"><circle cx="47.2" cy="47.2" r="47"/></clipPath>
<linearGradient id="hj" x1="0" x2="1" y1="0" y2="0"><stop offset="0" stop-color="#1b2239"/><stop offset=".45" stop-color="#2b3554"/><stop offset=".7" stop-color="#232c48"/><stop offset="1" stop-color="#171d31"/></linearGradient>
<radialGradient id="fc" cx=".45" cy=".4" r=".7"><stop offset="0" stop-color="#f6ddcb"/><stop offset=".7" stop-color="#e6c0a8"/><stop offset="1" stop-color="#c99c84"/></radialGradient></defs>
<g clip-path="url(#pc)">
<rect width="95" height="95" fill="#ededee"/>
<g stroke="#d3d3d5" stroke-width="1" fill="none" opacity=".9"><path d="M0 5 H95 M0 12 H95 M0 19 H95 M0 26 H95 M0 33 H95 M0 40 H95 M0 47 H95 M0 54 H95 M0 61 H95 M0 68 H95 M0 75 H95 M0 82 H95 M0 89 H95"/>
<path d="M20 5 V12 M42 5 V12 M70 5 V12 M10 12 V19 M30 12 V19 M68 12 V19 M86 12 V19 M20 19 V26 M72 19 V26 M10 26 V33 M28 26 V33 M80 26 V33 M18 33 V40 M72 33 V40 M90 33 V40 M8 40 V47 M26 40 V47 M80 40 V47 M16 47 V54 M86 47 V54 M6 54 V61 M14 54 V61 M82 61 V68 M10 61 V68 M88 68 V75 M6 68 V75 M12 75 V82 M84 75 V82"/></g>
<path d="M20 95 C19.4 84 19.6 70 21.5 60 C23.6 54.6 27 53.6 30.5 52.5 L66.5 48.7 C70.6 51 74.6 53.4 76.2 57 C78.4 66 78 84 77.4 95 Z" fill="#181e32"/>
<g fill="#c5cbd8" opacity=".85"><circle cx="25" cy="62" r=".7"/><circle cx="27.4" cy="69" r=".8"/><circle cx="23" cy="74" r=".6"/><circle cx="28" cy="80" r=".8"/><circle cx="24" cy="86" r=".7"/><circle cx="30.4" cy="75" r=".6"/><circle cx="30" cy="88" r=".7"/><circle cx="71" cy="60" r=".7"/><circle cx="74" cy="68" r=".8"/><circle cx="70.6" cy="75" r=".6"/><circle cx="74.6" cy="82" r=".8"/><circle cx="70" cy="87" r=".7"/><circle cx="73" cy="90" r=".6"/></g>
<path d="M49.2 8.2 C40 8.4 35.6 16 35.3 27 C35.2 35 31 42 28.2 48 C26 52.6 23.8 56.6 23.7 60 C24 63 27 63 31 61 C31.4 72 33.4 82 36.6 95 L63.4 95 C65.4 84 67.6 74 67.2 64.5 C67.4 58 65 51 63.4 45 C63.2 39 63.6 33 63.5 27 C63.4 16 58.6 8 49.2 8.2 Z" fill="url(#hj)"/>
<path d="M39 47 C43 56 45.6 70 44.6 95 M58 46 C54.6 60 53 76 54.6 95 M33 56 C36 66 38 80 39.6 95" stroke="#141a2c" stroke-width="1.1" fill="none" opacity=".8"/>
<path d="M41.6 41 C45 47 55 47 59 41 L57 50 C52 54 47 54 43 50 Z" fill="#12172a"/>
<ellipse cx="50.3" cy="30.4" rx="10" ry="13.7" fill="url(#fc)"/>
<path d="M40.2 30 C40.4 21 45 16.6 50.6 16.6 C56.4 16.6 60.4 21 60.4 30 C60.8 19 56.6 13.6 50.2 13.6 C43.8 13.6 39.8 19.6 40.2 30 Z" fill="#20294a"/>
<path d="M44.2 28.2 C45.2 27.4 46.8 27.4 47.8 28.2 M52.8 28.2 C53.8 27.4 55.4 27.4 56.4 28.2" stroke="#3a2c2a" stroke-width="1.1" fill="none"/>
<path d="M44 25.6 H48 M52.6 25.6 H56.6" stroke="#6a544c" stroke-width=".6"/>
<path d="M49.6 30 C49.2 33 49.4 34 50.8 34.4" stroke="#cf9f88" stroke-width=".6" fill="none"/>
<path d="M46.8 38 C48.8 39.6 52 39.6 54 38" stroke="#c2675f" stroke-width="1.1" fill="none"/>
</g></svg>
<!-- header lines -->
<div class="ln" style="left:392.5px;top:131.2px;width:174.2px"></div>
<div class="ln" style="left:392.5px;top:175.8px;width:174.2px"></div>
<div class="hp" style="top:181.3px">Lorem ipsum dolor sit amet, consectetur adipiscing elit, sed do</div>
<div class="hp" style="top:188.6px">eiusmod tempor incididunt ut labore et dolore magna aliqua. Ut enim</div>
<div class="hp" style="top:196px">ad minim veniam, quis nostrud exercitation ullamco laboris nisi ut</div>
<div class="hp" style="top:203.3px">Lorem ipsum dolor sit amet, consectetur adipiscing elit, sed do</div>
<div class="hp" style="top:210.6px">eiusmod tempor incididunt ut labore et dolore magna aliqua. Ut enim</div>
<div class="hp l" style="top:218px;letter-spacing:.3px">ad minim veniam,  quis nostrud exercitation ullamco laboris nisi ut.</div>
<!-- experience bar -->
<div class="a" style="left:392.5px;top:243px;width:173.4px;height:13.4px;background:#262626;box-shadow:2px 3px 3.5px rgba(0,0,0,.45)"></div>
<!-- contact icons -->
<svg class="a" style="left:259px;top:264px" width="28" height="96" viewBox="0 0 28 96"><g fill="none" stroke="#fff" stroke-width="1"><circle cx="14" cy="14.7" r="11.9"/><circle cx="14" cy="48" r="11.9"/><circle cx="14" cy="81.3" r="11.9"/><rect x="10.4" y="7.4" width="7.2" height="14.4" rx="1"/></g>
<rect x="10.6" y="19.2" width="6.8" height="2.4" fill="#fff"/>
<path d="M14 40.4 C16.4 40.4 17.4 42.4 17 45 C16.8 46.8 15.6 48.4 14 48.4 C12.4 48.4 11.2 46.8 11 45 C10.6 42.4 11.6 40.4 14 40.4 Z" fill="none" stroke="#fff" stroke-width=".9"/><path d="M10.8 43.2 C11.4 41 13 40.2 14.4 40.2 C16.4 40.2 17.4 41.6 17.2 43.6 C16 43.6 14.4 43 13.6 42 C12.8 42.8 11.8 43.2 10.8 43.2 Z" fill="#fff"/>
<path d="M7.6 54.6 C7.6 51.4 9.4 50.6 12 49.8 L14 53 L16 49.8 C18.6 50.6 20.4 51.4 20.4 54.6 Z" fill="#fff"/>
<path d="M14 74.6 C17 74.6 18.8 76.8 18.8 79.2 C18.8 82.4 15.4 85.6 14 88 C12.6 85.6 9.2 82.4 9.2 79.2 C9.2 76.8 11 74.6 14 74.6 Z" fill="#fff"/><circle cx="14" cy="79.2" r="2" fill="#1e4989"/></svg>
<!-- separators -->
<div class="a" style="left:258px;top:256.2px;width:113px;height:1.2px;background:#8cadd8"></div>
<div class="a" style="left:258px;top:374px;width:113px;height:1.2px;background:#8cadd8"></div>
<div class="a" style="left:258px;top:444.8px;width:113px;height:1.2px;background:#8cadd8"></div>
<!-- bars -->
<div class="bar" style="top:397px;left:259.2px;width:111.4px"><i style="width:88px"></i></div>
<div class="bar" style="top:412.2px;left:259.2px;width:111.4px"><i style="width:99.9px"></i></div>
<div class="bar" style="top:427.2px;left:259.2px;width:111.4px"><i style="width:66px"></i></div>
<div class="bar" style="top:469.2px"><i style="width:88px"></i></div>
<div class="bar" style="top:484.6px"><i style="width:99.9px"></i></div>
<div class="bar" style="top:499.6px"><i style="width:66px"></i></div>
<div class="bar" style="top:515.4px"><i style="width:100.2px"></i></div>
<div class="bar" style="top:530.4px"><i style="width:77.4px"></i></div>
<!-- experience paragraphs -->
<div class="p" style="top:277.65px">Lorem ipsum dolor sit amet, consectetur adipiscing elit, sed do eiusmod</div>
<div class="p" style="top:284.10px">tempor incididunt <u>ut labore</u> et <u>dolore</u> magna <u>aliqua</u>. <u>Ut enim</u> ad minim <u>veniam</u>,</div>
<div class="p" style="top:290.55px"><u>quis nostrud</u> exercitation <u>ullamco laboris</u> nisi ut. Lorem ipsum dolor sit amet,</div>
<div class="p" style="top:297.00px"><u>consectetur</u> adipiscing elit, sed do eiusmod tempor incididunt <u>ut labore</u> et</div>
<div class="p l" style="top:303.45px;letter-spacing:.18px"><u>dolore</u> magna <u>aliqua</u>. <u>Ut enim</u> ad minim <u>veniam</u>, <u>quis nostrud</u> exercitation</div>
<div class="p" style="top:323.85px">Lorem ipsum dolor sit amet, consectetur adipiscing elit, sed do eiusmod</div>
<div class="p" style="top:330.30px">tempor incididunt <u>ut labore</u> et <u>dolore</u> magna <u>aliqua</u>. <u>Ut enim</u> ad minim <u>veniam</u>,</div>
<div class="p" style="top:336.75px"><u>quis nostrud</u> exercitation <u>ullamco laboris</u> nisi ut. Lorem ipsum dolor sit amet,</div>
<div class="p" style="top:343.20px"><u>consectetur</u> adipiscing elit, sed do eiusmod tempor incididunt <u>ut labore</u> et</div>
<div class="p l" style="top:349.65px;letter-spacing:.18px"><u>dolore</u> magna <u>aliqua</u>. <u>Ut enim</u> ad minim <u>veniam</u>, <u>quis nostrud</u> exercitation</div>
<div class="p" style="top:371.45px">Lorem ipsum dolor sit amet, consectetur adipiscing elit, sed do eiusmod</div>
<div class="p" style="top:377.90px">tempor incididunt <u>ut labore</u> et <u>dolore</u> magna <u>aliqua</u>. <u>Ut enim</u> ad minim <u>veniam</u>,</div>
<div class="p" style="top:384.35px"><u>quis nostrud</u> exercitation <u>ullamco laboris</u> nisi ut. Lorem ipsum dolor sit amet,</div>
<div class="p" style="top:390.80px"><u>consectetur</u> adipiscing elit, sed do eiusmod tempor incididunt <u>ut labore</u> et</div>
<div class="p l" style="top:397.25px;letter-spacing:.18px"><u>dolore</u> magna <u>aliqua</u>. <u>Ut enim</u> ad minim <u>veniam</u>, <u>quis nostrud</u> exercitation</div>
<!-- ctrl tag -->
<div class="a" style="left:567.8px;top:260px;width:38.4px;height:13.4px;box-sizing:border-box;border:1px solid #ead98a;background:#fffdf0;box-shadow:.5px 1px 1.5px rgba(0,0,0,.2)"></div>
<svg class="a" style="left:570px;top:261.6px" width="11" height="10" viewBox="0 0 11 10"><rect x=".6" y="1.4" width="7.4" height="8" rx=".8" fill="#8a8f98" stroke="#555b64" stroke-width=".6"/><rect x="2.6" y=".4" width="3.4" height="2" fill="#c9ccd2" stroke="#555b64" stroke-width=".5"/><rect x="4" y="4" width="6.4" height="5.6" fill="#e9f1fb" stroke="#3f6fb5" stroke-width=".7"/><path d="M5.2 5.8 H9.2 M5.2 7.4 H9.2" stroke="#3f6fb5" stroke-width=".6"/></svg>
<div class="dd" style="left:601.6px;top:266px;border-top-color:#333"></div>

<!-- status bar -->
<div class="a" style="left:4.5px;top:647.4px;width:740.7px;height:15.2px;background:linear-gradient(#d6d9de 0%,#e0e2e6 14%,#d4d7dc 55%,#c4c8ce 100%);box-shadow:inset 0 .8px 0 #a3a7ae,0 .6px 0 #9ea3aa"></div>
<div class="a" style="left:53.4px;top:649px;width:1px;height:12px;background:#a9adb4;box-shadow:1px 0 0 #e4e6e9"></div>
<div class="a" style="left:114.6px;top:649px;width:1px;height:12px;background:#a9adb4;box-shadow:1px 0 0 #e4e6e9"></div>
<div class="a" style="left:137.4px;top:649px;width:1px;height:12px;background:#a9adb4;box-shadow:1px 0 0 #e4e6e9"></div>
<div class="a" style="left:550px;top:649px;width:1px;height:12px;background:#a9adb4;box-shadow:1px 0 0 #e4e6e9"></div>
<svg class="a" style="left:120.6px;top:649.6px" width="12" height="10" viewBox="0 0 12 10"><path d="M.6 6 L4 3.4 L8.6 5 L5.2 8.4 Z" fill="#eef1f7" stroke="#3d5ea8" stroke-width=".7"/><path d="M6 .8 L10.6 5.6 M10.6 .8 L6 5.6" stroke="#d8332b" stroke-width="1.3"/></svg>
<div class="a" style="left:553px;top:649.2px;width:12px;height:10.8px;box-sizing:border-box;border:1px solid #e7c23f;border-radius:1px;background:linear-gradient(#fdf0b3,#fbdc6c)"></div>
<div class="a" style="left:555.6px;top:651.6px;width:7px;height:6px;box-sizing:border-box;border:.8px solid #4b4f57;background:#fff"></div><div class="a" style="left:558px;top:654.4px;width:4.2px;height:2.6px;background:#4b4f57"></div>
<svg class="a" style="left:567.6px;top:650.6px" width="34" height="9" viewBox="0 0 34 9"><g fill="none" stroke="#5b616a" stroke-width=".8"><rect x=".6" y=".8" width="2.6" height="2.6"/><rect x="4.8" y=".8" width="2.6" height="2.6"/><rect x=".6" y="5" width="2.6" height="2.6"/><rect x="4.8" y="5" width="2.6" height="2.6"/><path d="M11.6 1.4 C13 .6 14.4 .8 15 1.6 C15.6 .8 17 .6 18.6 1.4 V7.4 C17 6.8 15.6 7 15 7.8 C14.4 7 13 6.8 11.6 7.4 Z" stroke="#9095a0"/><rect x="24.6" y=".8" width="6.6" height="4" /><path d="M27.9 4.8 V7 M25.8 8 H30"/></g></svg>
<div class="a" style="left:630.4px;top:649.4px;width:10px;height:10px;box-sizing:border-box;border:1px solid #8b9099;border-radius:50%;background:radial-gradient(#fff,#e3e5e9)"></div><div class="a" style="left:633px;top:653.9px;width:4.8px;height:1.1px;background:#50555d"></div>
<div class="a" style="left:642.4px;top:654.2px;width:63px;height:.8px;background:#a3a8b0"></div><div class="a" style="left:672.4px;top:652px;width:.8px;height:5px;background:#a3a8b0"></div>
<svg class="a" style="left:648.8px;top:649.8px" width="7" height="9" viewBox="0 0 7 9"><path d="M.6 .6 H6.4 V5.4 L3.5 8.4 L.6 5.4 Z" fill="#f3f4f6" stroke="#7f858e" stroke-width=".8" stroke-linejoin="round"/></svg>
<div class="a" style="left:705.8px;top:649.4px;width:10px;height:10px;box-sizing:border-box;border:1px solid #8b9099;border-radius:50%;background:radial-gradient(#fff,#e3e5e9)"></div><div class="a" style="left:708.4px;top:653.9px;width:4.8px;height:1.1px;background:#50555d"></div><div class="a" style="left:710.25px;top:652px;width:1.1px;height:4.8px;background:#50555d"></div>
<div class="a" style="left:721.4px;top:649.4px;width:10.4px;height:10px;box-sizing:border-box;border:1px solid #8b9099;border-radius:1px;background:#e8eaed"></div>
<svg class="a" style="left:722.8px;top:650.6px" width="8" height="8" viewBox="0 0 8 8"><path d="M.6 .6 L3 3 M7.4 .6 L5 3 M.6 7.4 L3 5 M7.4 7.4 L5 5" stroke="#5a6069" stroke-width=".9"/><path d="M.4 .4 H2.2 L.4 2.2 Z M7.6 .4 H5.8 L7.6 2.2 Z M.4 7.6 H2.2 L.4 5.8 Z M7.6 7.6 H5.8 L7.6 5.8 Z" fill="#5a6069"/></svg>
<svg class="a" style="left:738.6px;top:655.6px" width="6" height="6" viewBox="0 0 6 6"><g fill="#a6abb3"><rect x="4.2" y=".4" width="1.2" height="1.2"/><rect x="2.2" y="2.4" width="1.2" height="1.2"/><rect x="4.2" y="2.4" width="1.2" height="1.2"/><rect x=".2" y="4.4" width="1.2" height="1.2"/><rect x="2.2" y="4.4" width="1.2" height="1.2"/><rect x="4.2" y="4.4" width="1.2" height="1.2"/></g></svg>

<span class='t' style='left:310.0px;top:6.16px;font-size:7.75px;font-weight:400;color:#2b2b2b'>Test Test Test  -  Microsoft PowerPoint</span>
<span class='t' style='left:17.2px;top:24.11px;font-size:7.30px;font-weight:400;color:#ffffff'>File</span>
<span class='t' style='left:52.8px;top:24.11px;font-size:7.30px;font-weight:400;color:#3a3d42'>Home</span>
<span class='t' style='left:90.7px;top:24.11px;font-size:7.30px;font-weight:400;color:#3a3d42'>Insert</span>
<span class='t' style='left:128.0px;top:24.11px;font-size:7.30px;font-weight:400;color:#3a3d42'>Design</span>
<span class='t' style='left:169.5px;top:24.11px;font-size:7.30px;font-weight:400;color:#3a3d42'>Transitions</span>
<span class='t' style='left:224.3px;top:24.11px;font-size:7.30px;font-weight:400;color:#3a3d42'>Animations</span>
<span class='t' style='left:280.2px;top:24.11px;font-size:7.30px;font-weight:400;color:#3a3d42'>Slide Show</span>
<span class='t' style='left:335.3px;top:24.11px;font-size:7.30px;font-weight:400;color:#3a3d42'>Review</span>
<span class='t' style='left:377.4px;top:24.11px;font-size:7.30px;font-weight:400;color:#3a3d42'>View</span>
<span class='t' style='left:412.0px;top:24.11px;font-size:7.30px;font-weight:400;color:#3a3d42'>Acrobat</span>
<span class='t' style='left:9.4px;top:82.31px;font-size:7.30px;font-weight:400;color:#636a73'>Clipboard</span>
<span class='t' style='left:89.2px;top:82.31px;font-size:7.30px;font-weight:400;color:#636a73'>Slides</span>
<span class='t' style='left:201.7px;top:82.31px;font-size:7.30px;font-weight:400;color:#636a73'>Font</span>
<span class='t' style='left:330.0px;top:82.31px;font-size:7.30px;font-weight:400;color:#636a73'>Paragraph</span>
<span class='t' style='left:508.1px;top:82.31px;font-size:7.30px;font-weight:400;color:#636a73'>Drawing</span>
<span class='t' style='left:657.8px;top:82.31px;font-size:7.30px;font-weight:400;color:#636a73'>Editing</span>
<span class='t' style='left:12.2px;top:63.01px;font-size:7.30px;font-weight:400;color:#3a3d42'>Paste</span>
<span class='t' style='left:68.1px;top:63.01px;font-size:7.30px;font-weight:400;color:#3a3d42'>New</span>
<span class='t' style='left:65.0px;top:71.51px;font-size:7.30px;font-weight:400;color:#3a3d42'>Slide</span>
<span class='t' style='left:103.6px;top:41.01px;font-size:7.30px;font-weight:400;color:#3a3d42'>Layout</span>
<span class='t' style='left:103.1px;top:55.01px;font-size:7.30px;font-weight:400;color:#3a3d42'>Reset</span>
<span class='t' style='left:103.4px;top:69.01px;font-size:7.30px;font-weight:400;color:#3a3d42'>Section</span>
<span class='t' style='left:214.1px;top:46.17px;font-size:7.00px;font-weight:400;color:#9da2a9'>16+</span>
<span class='t' style='left:511.3px;top:63.01px;font-size:7.30px;font-weight:400;color:#3a3d42'>Arrange</span>
<span class='t' style='left:543.4px;top:63.01px;font-size:7.30px;font-weight:400;color:#9da2a9'>Quick</span>
<span class='t' style='left:540.0px;top:71.51px;font-size:7.30px;font-weight:400;color:#9da2a9'>Styles</span>
<span class='t' style='left:581.5px;top:41.01px;font-size:7.30px;font-weight:400;color:#9da2a9'>Shape Fill</span>
<span class='t' style='left:582.4px;top:55.01px;font-size:7.30px;font-weight:400;color:#9da2a9'>Shape Outline</span>
<span class='t' style='left:581.2px;top:69.01px;font-size:7.30px;font-weight:400;color:#9da2a9'>Shape Effects</span>
<span class='t' style='left:659.1px;top:41.01px;font-size:7.30px;font-weight:400;color:#3a3d42'>Find</span>
<span class='t' style='left:658.5px;top:55.01px;font-size:7.30px;font-weight:400;color:#3a3d42'>Replace</span>
<span class='t' style='left:658.4px;top:69.01px;font-size:7.30px;font-weight:400;color:#3a3d42'>Select</span>
<span class='t' style='left:10.8px;top:650.32px;font-size:7.27px;font-weight:400;color:#44484e'>Slide 2 of 2</span>
<span class='t' style='left:60.3px;top:650.37px;font-size:7.19px;font-weight:400;color:#44484e'>"Office Theme"</span>
<span class='t' style='left:607.8px;top:650.99px;font-size:6.59px;font-weight:400;color:#44484e'>37%</span>
<span class='t' style='left:582.0px;top:262.41px;font-size:7.65px;font-weight:400;color:#555b66'>(Ctrl)</span>
<span class='t' style='left:88.0px;top:622.93px;font-size:10.19px;font-weight:400;color:#2a2a2a'>Click to add notes</span>
<span class='t' style='left:12.5px;top:116.75px;font-size:5.93px;font-weight:700;color:#3a3a3a'>1</span>
<span class='t' style='left:11.8px;top:196.47px;font-size:7.55px;font-weight:700;color:#3a3a3a'>2</span>
<span class='t' style='left:431.3px;top:139.94px;font-size:10.89px;font-weight:700;color:#ededed;transform:scaleX(1.098);transform-origin:0 50%'>SITI NUR ELENA</span>
<span class='t' style='left:436.7px;top:155.34px;font-size:10.89px;font-weight:700;color:#ededed;transform:scaleX(1.150);transform-origin:0 50%'>ABDUL YAZID</span>
<span class='t' style='left:456.7px;top:246.42px;font-size:6.92px;font-weight:700;color:#ffffff'>EXPERIENCE</span>
<span class='t' style='left:290.0px;top:265.99px;font-size:5.87px;font-weight:700;color:#ffffff;transform:scaleX(0.876);transform-origin:0 50%'>CONTACT  ME</span>
<span class='t' style='left:290.0px;top:298.99px;font-size:5.87px;font-weight:700;color:#ffffff;transform:scaleX(0.895);transform-origin:0 50%'>MY PERSONAL  DETAILS</span>
<span class='t' style='left:290.0px;top:332.19px;font-size:5.87px;font-weight:700;color:#ffffff;transform:scaleX(0.891);transform-origin:0 50%'>MY  ADDRESS</span>
<span class='t' style='left:296.7px;top:377.59px;font-size:5.87px;font-weight:700;color:#ffffff;transform:scaleX(0.902);transform-origin:0 50%'>LANGUAGES</span>
<span class='t' style='left:289.7px;top:448.79px;font-size:5.87px;font-weight:700;color:#ffffff;transform:scaleX(0.859);transform-origin:0 50%'>PERSONAL  SKILLS</span>
<span class='t' style='left:290.0px;top:275.75px;font-size:4.66px;font-weight:400;color:#e6ebf3'>Email: exampleemail@gmail.com</span>
<span class='t' style='left:290.0px;top:282.52px;font-size:4.53px;font-weight:400;color:#e6ebf3'>Cell: 012-345 6789</span>
<span class='t' style='left:290.0px;top:309.11px;font-size:4.74px;font-weight:400;color:#e6ebf3'>DOB: 30 February 1990</span>
<span class='t' style='left:290.0px;top:315.51px;font-size:4.55px;font-weight:400;color:#e6ebf3'>IC: 900230-14-1234</span>
<span class='t' style='left:290.3px;top:343.26px;font-size:4.64px;font-weight:400;color:#e6ebf3'>No. 1, <u>Jalan 7</u>, <u>Simpang</u> 3,</span>
<span class='t' style='left:290.3px;top:349.28px;font-size:4.60px;font-weight:400;color:#e6ebf3'>Taman <u>Muda</u> 4, Lima <u>Tapak</u>,</span>
<span class='t' style='left:290.3px;top:355.81px;font-size:4.55px;font-weight:400;color:#e6ebf3'>51200 Kuala Lumpur</span>
<span class='t' style='left:259.3px;top:388.85px;font-size:5.03px;font-weight:400;color:#e6ebf3'>English</span>
<span class='t' style='left:259.3px;top:404.97px;font-size:5.18px;font-weight:400;color:#e6ebf3'>Bahasa <u>Melayu</u></span>
<span class='t' style='left:259.3px;top:419.52px;font-size:5.44px;font-weight:400;color:#e6ebf3'>Mandarin</span>
<span class='t' style='left:260.3px;top:462.10px;font-size:5.30px;font-weight:400;color:#c9d3e3'>Analytical</span>
<span class='t' style='left:260.3px;top:477.05px;font-size:5.40px;font-weight:400;color:#c9d3e3'>Business-minded</span>
<span class='t' style='left:260.3px;top:492.22px;font-size:5.09px;font-weight:400;color:#c9d3e3'>Teamwork</span>
<span class='t' style='left:260.3px;top:508.74px;font-size:5.42px;font-weight:400;color:#c9d3e3'><u>Adaptibility</u></span>
<span class='t' style='left:260.3px;top:523.42px;font-size:5.27px;font-weight:400;color:#c9d3e3'>Consistency</span>
<span class='t' style='left:395.0px;top:268.68px;font-size:4.61px;font-weight:700;color:#2a2a2a;transform:scaleX(0.940);transform-origin:0 50%'>OPERATION MANAGER</span>
<span class='t' style='left:446.5px;top:268.76px;font-size:4.47px;font-weight:400;color:#4a4a4a;transform:scaleX(0.887);transform-origin:0 50%'>|  XYZ CORP</span>
<span class='t' style='left:543.0px;top:268.68px;font-size:4.61px;font-weight:700;color:#2a2a2a;transform:scaleX(0.919);transform-origin:0 50%'>CURRENT</span>
<span class='t' style='left:395.0px;top:314.88px;font-size:4.61px;font-weight:700;color:#2a2a2a;transform:scaleX(0.854);transform-origin:0 50%'>PROCESS SPECIALIST</span>
<span class='t' style='left:441.0px;top:314.96px;font-size:4.47px;font-weight:400;color:#4a4a4a;transform:scaleX(0.930);transform-origin:0 50%'>|  QRS HOLDING</span>
<span class='t' style='left:539.0px;top:314.88px;font-size:4.61px;font-weight:700;color:#2a2a2a;transform:scaleX(0.996);transform-origin:0 50%'>2014 - 2015</span>
<span class='t' style='left:395.0px;top:362.08px;font-size:4.61px;font-weight:700;color:#2a2a2a;transform:scaleX(0.857);transform-origin:0 50%'>PROCESS ASSOCIATE</span>
<span class='t' style='left:440.5px;top:362.16px;font-size:4.47px;font-weight:400;color:#4a4a4a;transform:scaleX(0.967);transform-origin:0 50%'>|  COMPANY ABC SDN BHD</span>
<span class='t' style='left:539.0px;top:362.08px;font-size:4.61px;font-weight:700;color:#2a2a2a;transform:scaleX(0.996);transform-origin:0 50%'>2012 - 2014</span>
</div></body></html>
